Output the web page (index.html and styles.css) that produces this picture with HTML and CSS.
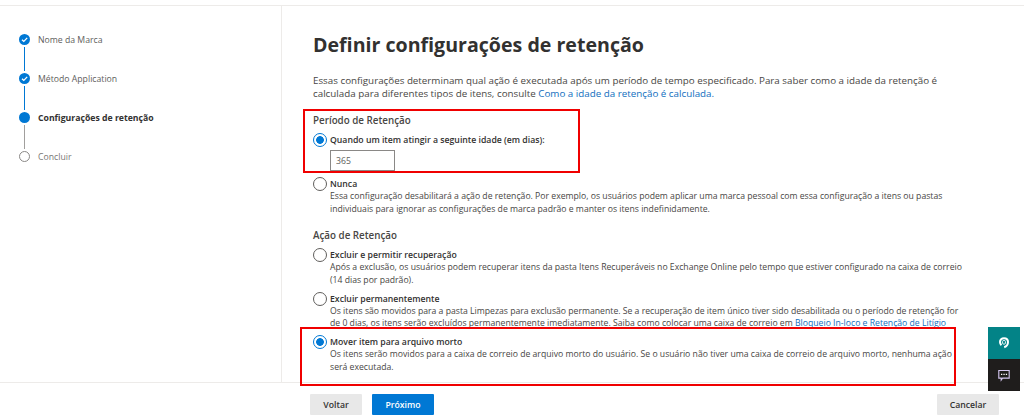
FILE: index.html
```html
<!DOCTYPE html>
<html lang="pt-BR">
<head>
    <meta charset="UTF-8">
    <title>Definir configurações de retenção</title>
    <link rel="stylesheet" href="styles.css">
</head>
<body>
    <div class="app">
        <div class="content">
            <div class="sidebar">
                <div class="step done">
                    <div class="marker">
                        <span class="dot">
                            <svg viewBox="0 0 11 11" width="11" height="11"><path d="M3 5.7 4.8 7.4 8.2 3.9" fill="none" stroke="#fff" stroke-width="1.3"/></svg>
                        </span>
                        <span class="line"></span>
                    </div>
                    <span class="step-label">Nome da Marca</span>
                </div>
                <div class="step done">
                    <div class="marker">
                        <span class="dot">
                            <svg viewBox="0 0 11 11" width="11" height="11"><path d="M3 5.7 4.8 7.4 8.2 3.9" fill="none" stroke="#fff" stroke-width="1.3"/></svg>
                        </span>
                        <span class="line"></span>
                    </div>
                    <span class="step-label">Método Application</span>
                </div>
                <div class="step current">
                    <div class="marker">
                        <span class="dot"></span>
                        <span class="line"></span>
                    </div>
                    <span class="step-label">Configurações de retenção</span>
                </div>
                <div class="step todo">
                    <div class="marker">
                        <span class="dot"></span>
                    </div>
                    <span class="step-label">Concluir</span>
                </div>
            </div>

            <div class="main">
                <h1>Definir configurações de retenção</h1>
                <p class="intro">Essas configurações determinam qual ação é executada após um período de tempo especificado. Para saber como a idade da retenção é calculada para diferentes tipos de itens, consulte <a href="#">Como a idade da retenção é calculada.</a></p>

                <h2>Período de Retenção</h2>
                <div class="option">
                    <span class="radio checked"></span>
                    <div class="option-body">
                        <div class="option-title">Quando um item atingir a seguinte idade (em dias):</div>
                        <input class="days" type="text" value="365">
                    </div>
                </div>
                <div class="option">
                    <span class="radio"></span>
                    <div class="option-body">
                        <div class="option-title">Nunca</div>
                        <p>Essa configuração desabilitará a ação de retenção. Por exemplo, os usuários podem aplicar uma marca pessoal com essa configuração a itens ou pastas<br>individuais para ignorar as configurações de marca padrão e manter os itens indefinidamente.</p>
                    </div>
                </div>

                <h2>Ação de Retenção</h2>
                <div class="option">
                    <span class="radio"></span>
                    <div class="option-body">
                        <div class="option-title">Excluir e permitir recuperação</div>
                        <p>Após a exclusão, os usuários podem recuperar itens da pasta Itens Recuperáveis no Exchange Online pelo tempo que estiver configurado na caixa de correio<br>(14 dias por padrão).</p>
                    </div>
                </div>
                <div class="option">
                    <span class="radio"></span>
                    <div class="option-body">
                        <div class="option-title">Excluir permanentemente</div>
                        <p>Os itens são movidos para a pasta Limpezas para exclusão permanente. Se a recuperação de item único tiver sido desabilitada ou o período de retenção for<br>de 0 dias, os itens serão excluídos permanentemente imediatamente. Saiba como colocar uma caixa de correio em <a href="#">Bloqueio In-loco e Retenção de Litígio</a></p>
                    </div>
                </div>
                <div class="option">
                    <span class="radio checked"></span>
                    <div class="option-body">
                        <div class="option-title">Mover item para arquivo morto</div>
                        <p>Os itens serão movidos para a caixa de correio de arquivo morto do usuário. Se o usuário não tiver uma caixa de correio de arquivo morto, nenhuma ação<br>será executada.</p>
                    </div>
                </div>
            </div>
        </div>

        <div class="footer">
            <div class="footer-left">
                <button class="btn">Voltar</button>
                <button class="btn primary">Próximo</button>
            </div>
            <button class="btn cancel">Cancelar</button>
        </div>

        <!-- marcas vermelhas do print -->
        <div class="highlight box-one"></div>
        <div class="highlight box-two"></div>

        <div class="float-buttons">
            <div class="float-btn help">
                <svg viewBox="0 0 12 14" width="12" height="14"><path d="M3.4 9.2C2.500 8.400 2 7.400 2 6.100 2 3.800 3.700 2.200 6 2.200s4 1.600 4 3.900c0 2.500-1.200 4.300-3.800 5.100" fill="none" stroke="#fff" stroke-width="2"/><rect x="4.600" y="4.400" width="2.800" height="3.800" rx="1.200" fill="#038387" stroke="#fff" stroke-width=".9"/></svg>
            </div>
            <div class="float-btn chat">
                <svg viewBox="0 0 14 14" width="14" height="14"><path d="M1.800 2.500h10.400v7.600H5.600L4.200 12v-1.900H1.800z" fill="none" stroke="#d6c8f2" stroke-width="1.100"/><path d="M4 6.300h1.300M6.400 6.300h1.300M8.800 6.300h1.300" stroke="#fff" stroke-width="1.200"/></svg>
            </div>
        </div>
    </div>
</body>
</html>
```
FILE: styles.css
```css
* {
    margin: 0;
    padding: 0;
    box-sizing: border-box;
}

html, body {
    height: 420px;
    overflow: hidden;
}

body {
    font-family: 'Open Sans', 'Noto Sans', sans-serif;
    font-size: 8.7px;
    color: #323130;
    background: white;
}

.app {
    position: relative;
    height: 420px;
    padding-top: 5px;
    display: flex;
    flex-direction: column;
}

.content {
    height: 377px;
    display: flex;
    border-top: 1px solid #edebe9;
}

.sidebar {
    width: 282px;
    flex-shrink: 0;
    padding: 28px 0 0 19px;
    border-right: 1px solid #edebe9;
}

.step {
    display: flex;
    gap: 8px;
    height: 39px;
}

.marker {
    width: 11px;
    display: flex;
    flex-direction: column;
    align-items: center;
}

.dot {
    width: 11px;
    height: 11px;
    border-radius: 50%;
    flex-shrink: 0;
    display: block;
    background: #0078d4;
}

.dot svg {
    display: block;
}

.line {
    width: 1.5px;
    height: 24px;
    margin-top: 2px;
    background: #0078d4;
}

.current .line {
    background: #a19f9d;
}

.todo .dot {
    background: white;
    border: 1.5px solid #8a8886;
}

.step-label {
    line-height: 12px;
    color: #605e5c;
    white-space: nowrap;
}

.current .step-label {
    font-weight: 700;
    color: #323130;
}

.todo .step-label {
    color: #797775;
}

.main {
    padding: 26px 0 0 31px;
    flex: 1;
}

h1 {
    font-size: 19.6px;
    font-weight: 700;
    line-height: 26px;
    color: #323130;
    margin-bottom: 16px;
}

.intro {
    font-size: 9.8px;
    line-height: 13px;
    width: 650px;
    color: #484644;
}

a {
    color: #106ebe;
    text-decoration: none;
}

.intro a {
    display: inline-block;
    line-height: 12px;
}

h2 {
    font-size: 9.8px;
    font-weight: 600;
    line-height: 14px;
    color: #484644;
    margin: 14px 0 6px;
}

.option {
    display: flex;
    gap: 3px;
    margin-bottom: 6.5px;
}

.radio {
    width: 14px;
    height: 14px;
    margin-top: -1px;
    border: 1px solid #605e5c;
    border-radius: 50%;
    flex-shrink: 0;
    background: white;
}

.radio.checked {
    border-color: #0078d4;
    background: radial-gradient(circle, #0078d4 0 3.5px, white 4.2px);
}

.option-body p {
    font-size: 8.66px;
    line-height: 12.5px;
    color: #484644;
    white-space: nowrap;
}

.option-title {
    font-weight: 600;
    line-height: 12px;
    color: #323130;
}

.days {
    display: block;
    width: 65px;
    height: 21px;
    margin: 4px 0 0.5px;
    padding-left: 5px;
    border: 1px solid #8a8886;
    font-family: inherit;
    font-size: 8.7px;
    color: #605e5c;
}

.footer {
    flex: 1;
    display: flex;
    justify-content: space-between;
    align-items: flex-start;
    padding: 11px 25px 0 310px;
    border-top: 1px solid #edebe9;
}

.footer-left {
    display: flex;
    gap: 10px;
}

.btn {
    height: 21px;
    width: 52px;
    border: none;
    border-radius: 1px;
    background: #e8e8e8;
    font-family: inherit;
    font-size: 8.7px;
    font-weight: 600;
    color: #323130;
}

.btn.primary {
    width: 62px;
    background: #0078d4;
    color: white;
}

.btn.cancel {
    width: 62px;
}

.highlight {
    position: absolute;
    border: 2px solid #f00000;
}

.box-one {
    left: 303px;
    top: 109px;
    width: 277px;
    height: 64px;
}

.box-two {
    left: 300px;
    top: 327px;
    width: 656px;
    height: 59px;
}

.float-buttons {
    position: absolute;
    left: 988px;
    top: 327px;
    width: 32px;
}

.float-btn {
    display: flex;
    align-items: center;
    justify-content: center;
}

.help {
    height: 32px;
    background: #038387;
}

.chat {
    height: 32px;
    background: #1f1d1c;
}
```
